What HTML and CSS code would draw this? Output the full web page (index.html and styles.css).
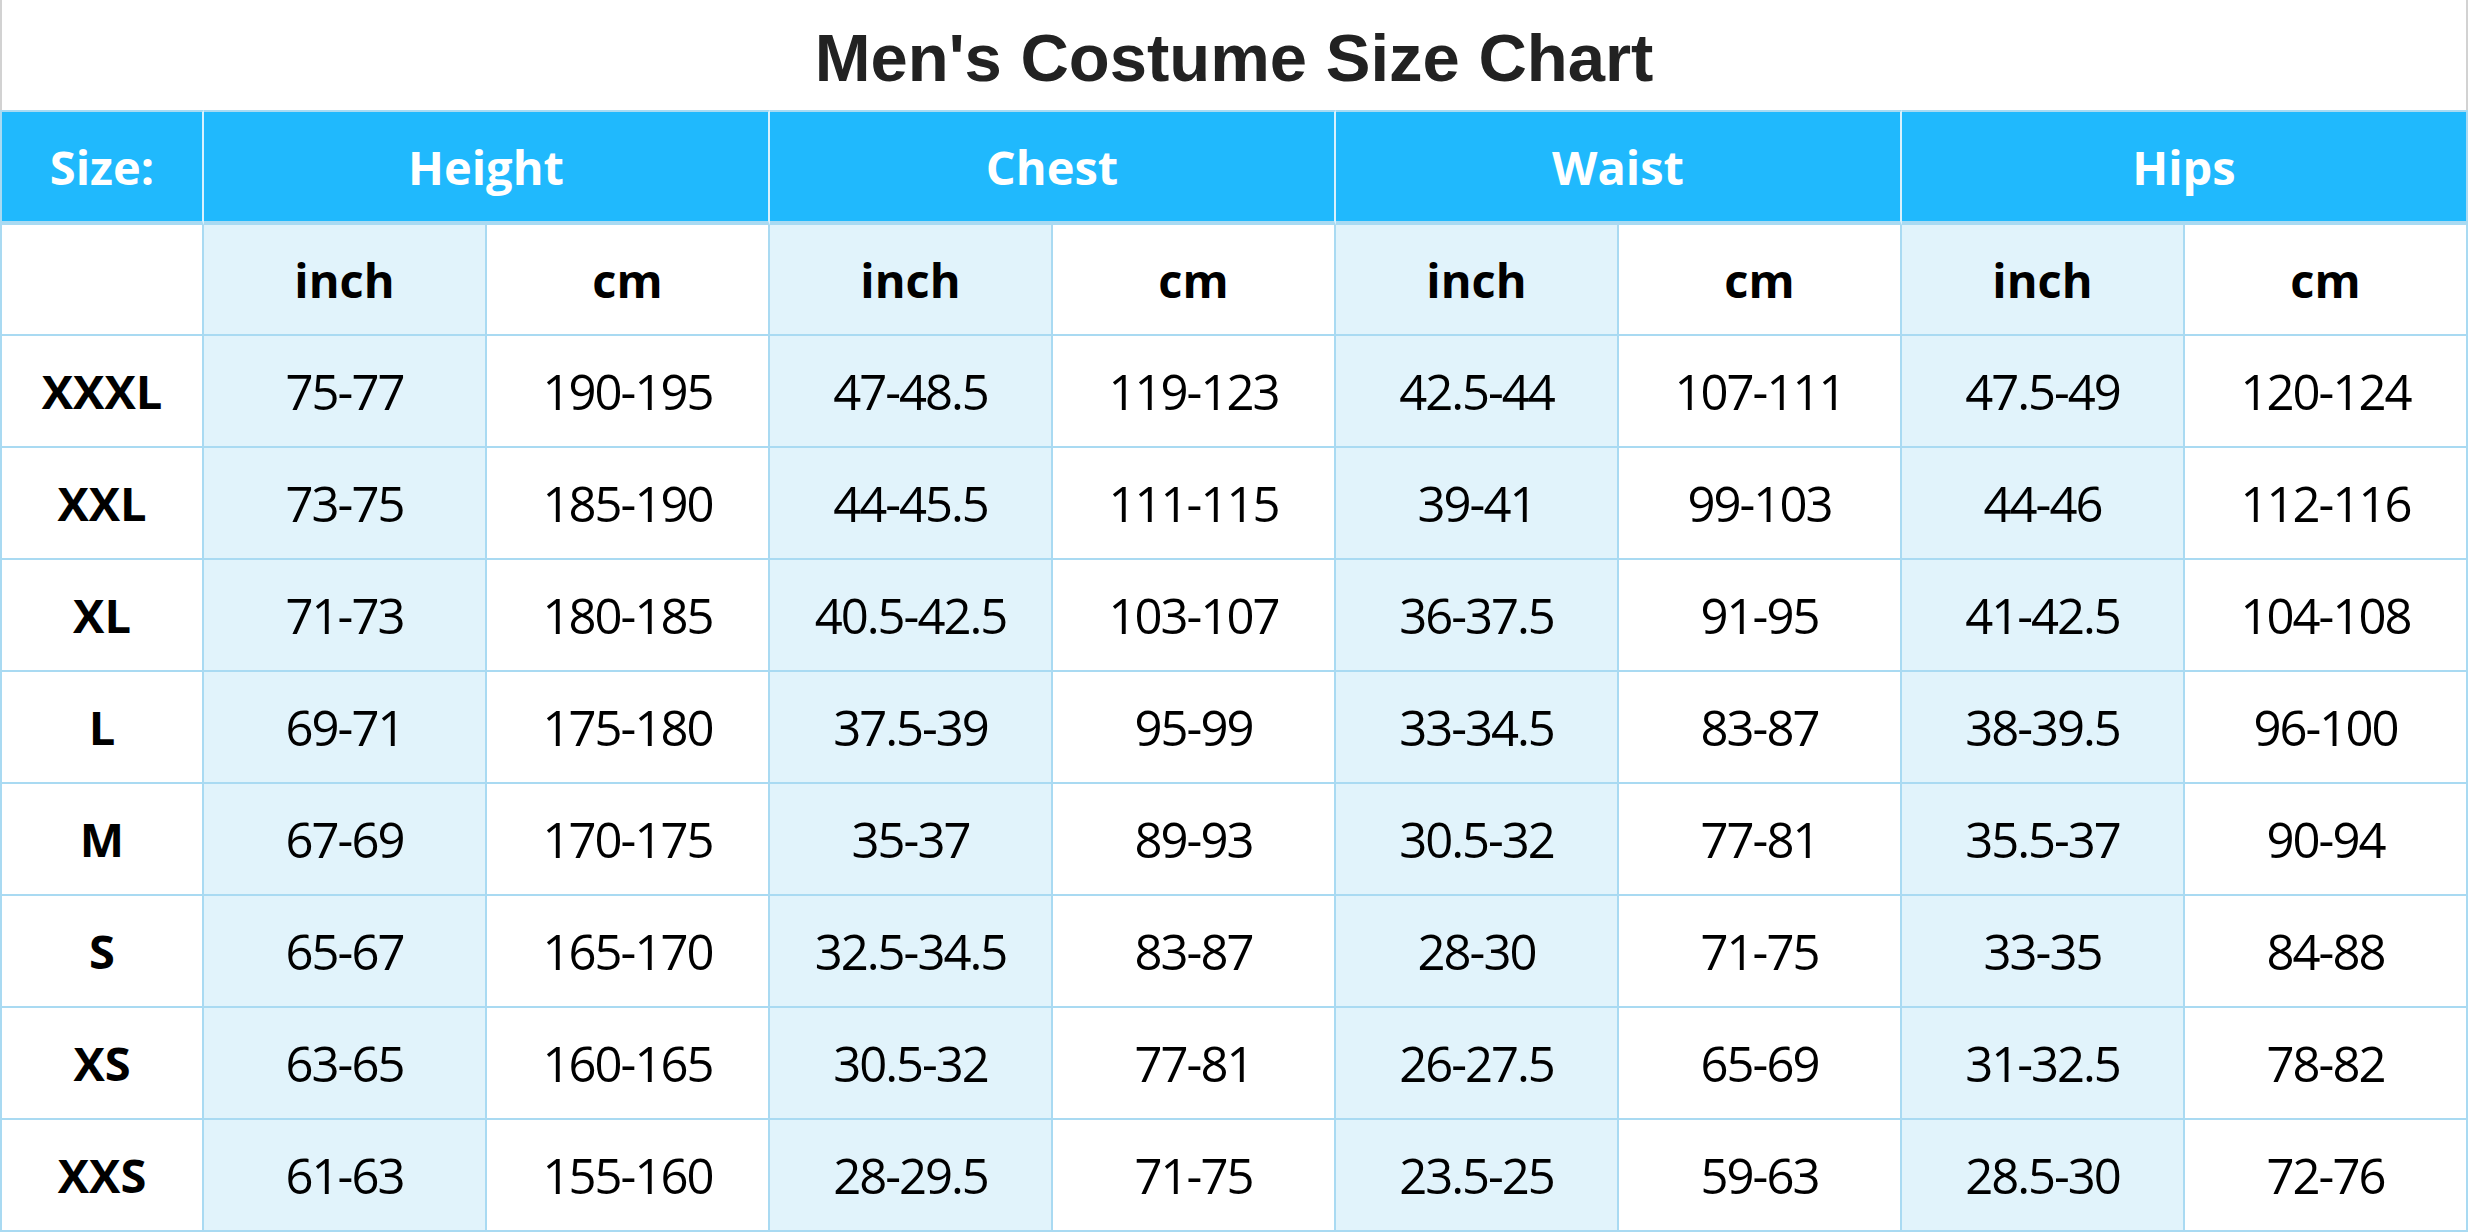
FILE: index.html
```html
<!DOCTYPE html>
<html lang="en">
<head>
<meta charset="utf-8">
<title>Men's Costume Size Chart</title>
<link rel="stylesheet" href="styles.css">
</head>
<body>
<div class="chart">
  <h1 class="title">Men's Costume Size Chart</h1>
  <table class="sizes">
    <colgroup>
      <col class="c-size">
      <col><col><col><col><col><col><col><col>
    </colgroup>
    <thead>
      <tr class="groups">
        <th class="first">Size:</th>
        <th colspan="2">Height</th>
        <th colspan="2">Chest</th>
        <th colspan="2">Waist</th>
        <th colspan="2">Hips</th>
      </tr>
      <tr class="units">
        <th class="first"></th>
        <th class="inch">inch</th><th>cm</th>
        <th class="inch">inch</th><th>cm</th>
        <th class="inch">inch</th><th>cm</th>
        <th class="inch">inch</th><th>cm</th>
      </tr>
    </thead>
    <tbody>
      <tr><th class="first">XXXL</th><td class="inch">75-77</td><td>190-195</td><td class="inch">47-48.5</td><td>119-123</td><td class="inch">42.5-44</td><td>107-111</td><td class="inch">47.5-49</td><td>120-124</td></tr>
      <tr><th class="first">XXL</th><td class="inch">73-75</td><td>185-190</td><td class="inch">44-45.5</td><td>111-115</td><td class="inch">39-41</td><td>99-103</td><td class="inch">44-46</td><td>112-116</td></tr>
      <tr><th class="first">XL</th><td class="inch">71-73</td><td>180-185</td><td class="inch">40.5-42.5</td><td>103-107</td><td class="inch">36-37.5</td><td>91-95</td><td class="inch">41-42.5</td><td>104-108</td></tr>
      <tr><th class="first">L</th><td class="inch">69-71</td><td>175-180</td><td class="inch">37.5-39</td><td>95-99</td><td class="inch">33-34.5</td><td>83-87</td><td class="inch">38-39.5</td><td>96-100</td></tr>
      <tr><th class="first">M</th><td class="inch">67-69</td><td>170-175</td><td class="inch">35-37</td><td>89-93</td><td class="inch">30.5-32</td><td>77-81</td><td class="inch">35.5-37</td><td>90-94</td></tr>
      <tr><th class="first">S</th><td class="inch">65-67</td><td>165-170</td><td class="inch">32.5-34.5</td><td>83-87</td><td class="inch">28-30</td><td>71-75</td><td class="inch">33-35</td><td>84-88</td></tr>
      <tr><th class="first">XS</th><td class="inch">63-65</td><td>160-165</td><td class="inch">30.5-32</td><td>77-81</td><td class="inch">26-27.5</td><td>65-69</td><td class="inch">31-32.5</td><td>78-82</td></tr>
      <tr><th class="first">XXS</th><td class="inch">61-63</td><td>155-160</td><td class="inch">28-29.5</td><td>71-75</td><td class="inch">23.5-25</td><td>59-63</td><td class="inch">28.5-30</td><td>72-76</td></tr>
    </tbody>
  </table>
</div>
</body>
</html>
```

FILE: styles.css
```css
html, body {
  margin: 0;
  padding: 0;
  background: #ffffff;
}

.chart {
  width: 2468px;
  height: 1232px;
  overflow: hidden;
  background: #ffffff;
}

.title {
  box-sizing: border-box;
  margin: 0;
  height: 110px;
  padding-top: 6px;
  line-height: 104px;
  text-align: center;
  font-family: "Liberation Sans", Arial, sans-serif;
  font-weight: bold;
  font-size: 67px;
  color: #222222;
  border-left: 2px solid #d2d2d2;
  border-right: 2px solid #d2d2d2;
}

.sizes {
  width: 2468px;
  table-layout: fixed;
  border-collapse: separate;
  border-spacing: 0;
  font-family: "Open Sans", "Noto Sans", sans-serif;
  font-size: 47px;
  color: #000000;
}

.c-size {
  width: 204px;
}

.sizes th,
.sizes td {
  box-sizing: border-box;
  padding: 0;
  text-align: center;
  vertical-align: middle;
  border-right: 2px solid #a9daf2;
  border-bottom: 2px solid #a9daf2;
  background: #ffffff;
}

.sizes td {
  font-weight: normal;
  font-size: 49px;
  letter-spacing: -2px;
}

.sizes th {
  font-weight: bold;
}

.sizes .first {
  border-left: 2px solid #a9daf2;
}

.sizes .inch {
  background: #e1f3fb;
}

.groups {
  height: 115px;
}

.groups th {
  background: #20b9fd;
  color: #ffffff;
  border-top: 2px solid #a9daf2;
  border-right: 2px solid #d9f1fd;
  border-bottom: 4px solid #a9daf2;
}

.groups th:last-child {
  border-right-color: #a9daf2;
}

.units {
  height: 111px;
}

.sizes tbody tr {
  height: 112px;
}
```
